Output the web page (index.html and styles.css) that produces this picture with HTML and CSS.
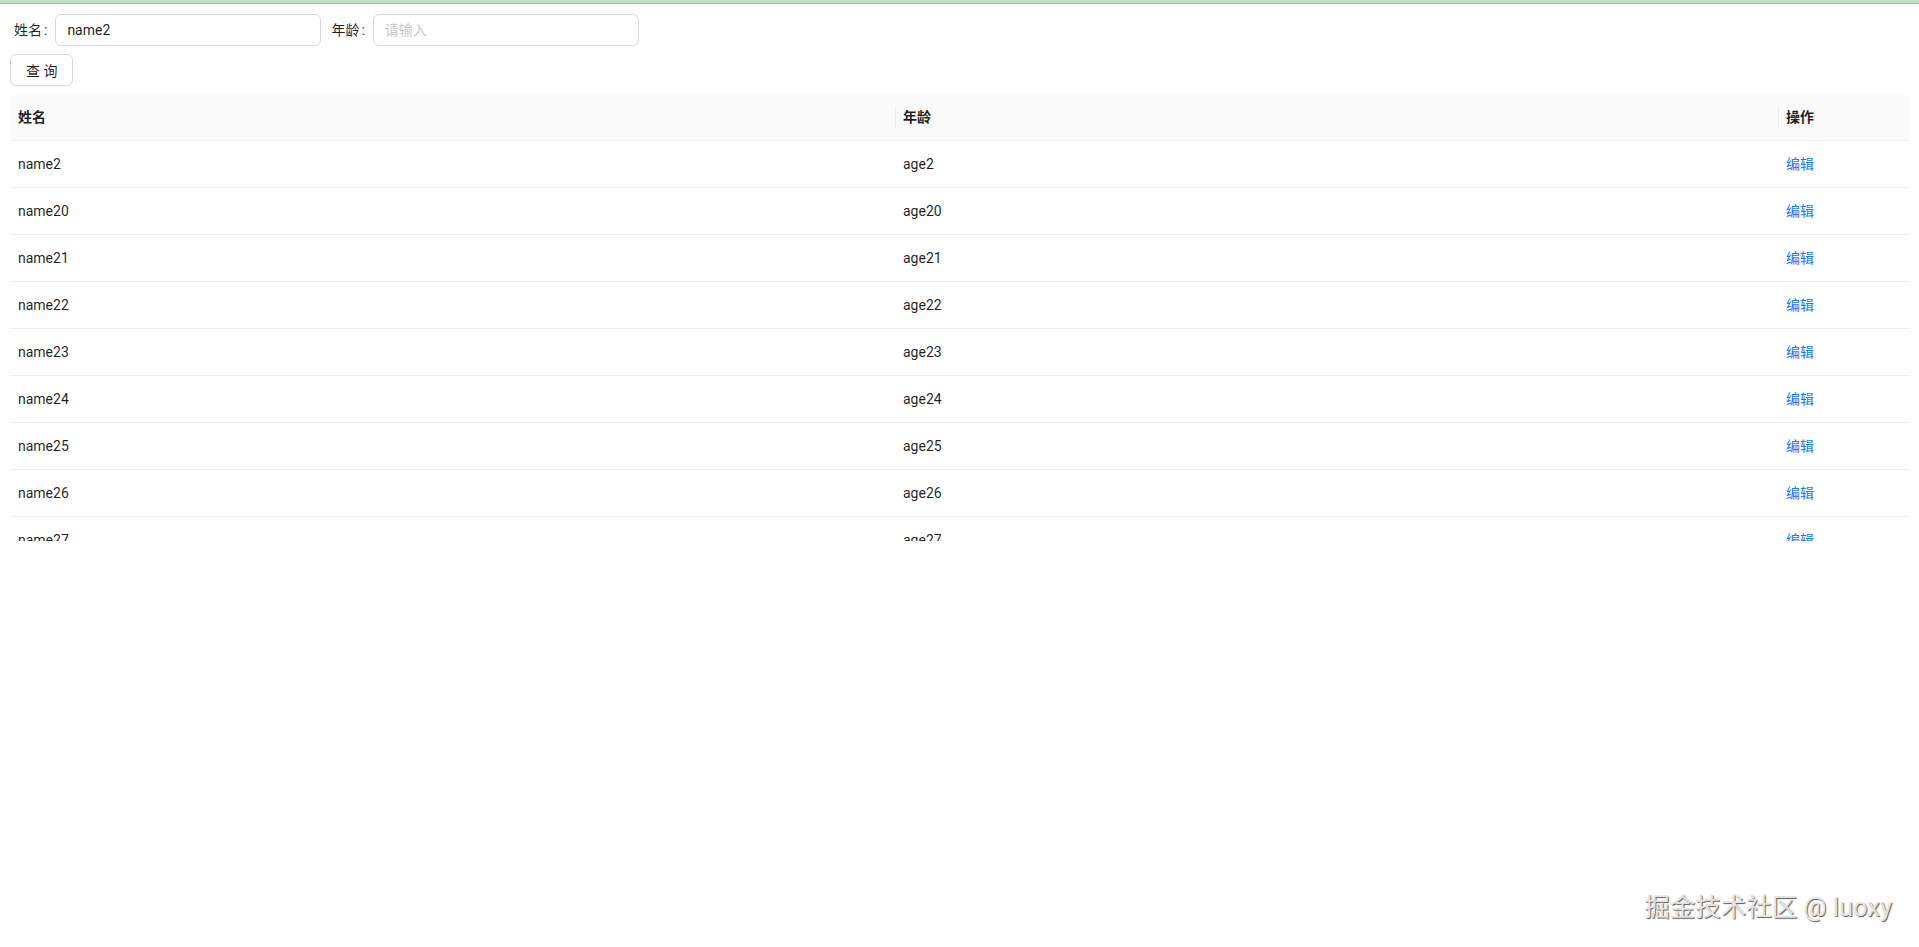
FILE: index.html
```html
<!DOCTYPE html>
<html lang="zh-CN">
<head>
<meta charset="utf-8">
<title>Table</title>
<link rel="stylesheet" href="styles.css">
</head>
<body>
<div class="topbar"></div>
<main class="page">
  <form class="search-form">
    <div class="form-item">
      <label class="form-label">姓名</label>
      <input class="input" type="text" value="name2">
    </div>
    <div class="form-item">
      <label class="form-label">年龄</label>
      <input class="input" type="text" placeholder="请输入">
    </div>
  </form>
  <div class="actions">
    <button class="btn" type="button">查 询</button>
  </div>
  <div class="table">
    <div class="thead">
      <div class="th">姓名</div>
      <div class="th th-div">年龄</div>
      <div class="th th-div">操作</div>
    </div>
    <div class="tbody">
      <div class="tr"><div class="td">name2</div><div class="td">age2</div><div class="td"><a class="link">编辑</a></div></div>
      <div class="tr"><div class="td">name20</div><div class="td">age20</div><div class="td"><a class="link">编辑</a></div></div>
      <div class="tr"><div class="td">name21</div><div class="td">age21</div><div class="td"><a class="link">编辑</a></div></div>
      <div class="tr"><div class="td">name22</div><div class="td">age22</div><div class="td"><a class="link">编辑</a></div></div>
      <div class="tr"><div class="td">name23</div><div class="td">age23</div><div class="td"><a class="link">编辑</a></div></div>
      <div class="tr"><div class="td">name24</div><div class="td">age24</div><div class="td"><a class="link">编辑</a></div></div>
      <div class="tr"><div class="td">name25</div><div class="td">age25</div><div class="td"><a class="link">编辑</a></div></div>
      <div class="tr"><div class="td">name26</div><div class="td">age26</div><div class="td"><a class="link">编辑</a></div></div>
      <div class="tr"><div class="td">name27</div><div class="td">age27</div><div class="td"><a class="link">编辑</a></div></div>
      <div class="tr"><div class="td">name28</div><div class="td">age28</div><div class="td"><a class="link">编辑</a></div></div>
    </div>
  </div>
</main>
<div class="watermark">掘金技术社区 @ luoxy</div>
</body>
</html>
```

FILE: styles.css
```css
* { box-sizing: border-box; }

html, body {
  margin: 0;
  padding: 0;
  background: #ffffff;
  font-family: Roboto, "Noto Sans CJK SC", "Noto Sans", sans-serif;
  font-size: 14px;
  color: rgba(0, 0, 0, 0.88);
}

body {
  position: relative;
  height: 947px;
  overflow: hidden;
}

.topbar {
  height: 4px;
  background: #bfe3c2;
  border-bottom: 1px solid #94c99e;
}

.page {
  padding: 10px 9px 0 10px;
}

.search-form {
  display: flex;
  align-items: center;
  padding-left: 4px;
}

.form-item {
  display: flex;
  align-items: center;
  margin-right: 10px;
}

.form-label {
  line-height: 32px;
  white-space: nowrap;
}

.form-label::after {
  content: ":";
  margin: 0 8px 0 2px;
  position: relative;
  top: -0.5px;
}

.input {
  width: 266px;
  height: 32px;
  padding: 4px 11px;
  border: 1px solid #d9d9d9;
  border-radius: 6px;
  font-family: inherit;
  font-size: 14px;
  color: rgba(0, 0, 0, 0.88);
  background: #fff;
  outline: none;
}

.input::placeholder {
  color: rgba(0, 0, 0, 0.25);
}

.actions {
  margin-top: 8px;
}

.btn {
  height: 32px;
  padding: 4px 15px;
  border: 1px solid #d9d9d9;
  border-radius: 6px;
  background: #fff;
  font-family: inherit;
  font-size: 14px;
  color: rgba(0, 0, 0, 0.88);
  box-shadow: 0 2px 0 rgba(0, 0, 0, 0.02);
}

.table {
  margin-top: 8px;
}

.thead,
.tr {
  display: grid;
  grid-template-columns: 885px 883px 1fr;
}

.thead {
  background: #fafafa;
  border-radius: 8px 8px 0 0;
}

.th {
  position: relative;
  padding: 12px 8px;
  line-height: 22px;
  font-weight: 600;
  color: rgba(0, 0, 0, 0.88);
  border-bottom: 1px solid #f0f0f0;
}

.th-div::before {
  content: "";
  position: absolute;
  left: 0;
  top: 50%;
  width: 1px;
  height: 22px;
  transform: translateY(-50%);
  background: rgba(0, 0, 0, 0.06);
}

.tbody {
  height: 400px;
  overflow: hidden;
}

.td {
  padding: 12px 8px;
  line-height: 22px;
  border-bottom: 1px solid #f0f0f0;
  color: rgba(0, 0, 0, 0.88);
}

.link {
  color: #1677ff;
  text-decoration: none;
  cursor: pointer;
}

.watermark {
  position: absolute;
  right: 27px;
  top: 889px;
  font-size: 25.5px;
  line-height: 36px;
  color: #e4e4e4;
  text-shadow: 1px 1px 1px rgba(0, 0, 0, 0.65);
  white-space: nowrap;
}
```
